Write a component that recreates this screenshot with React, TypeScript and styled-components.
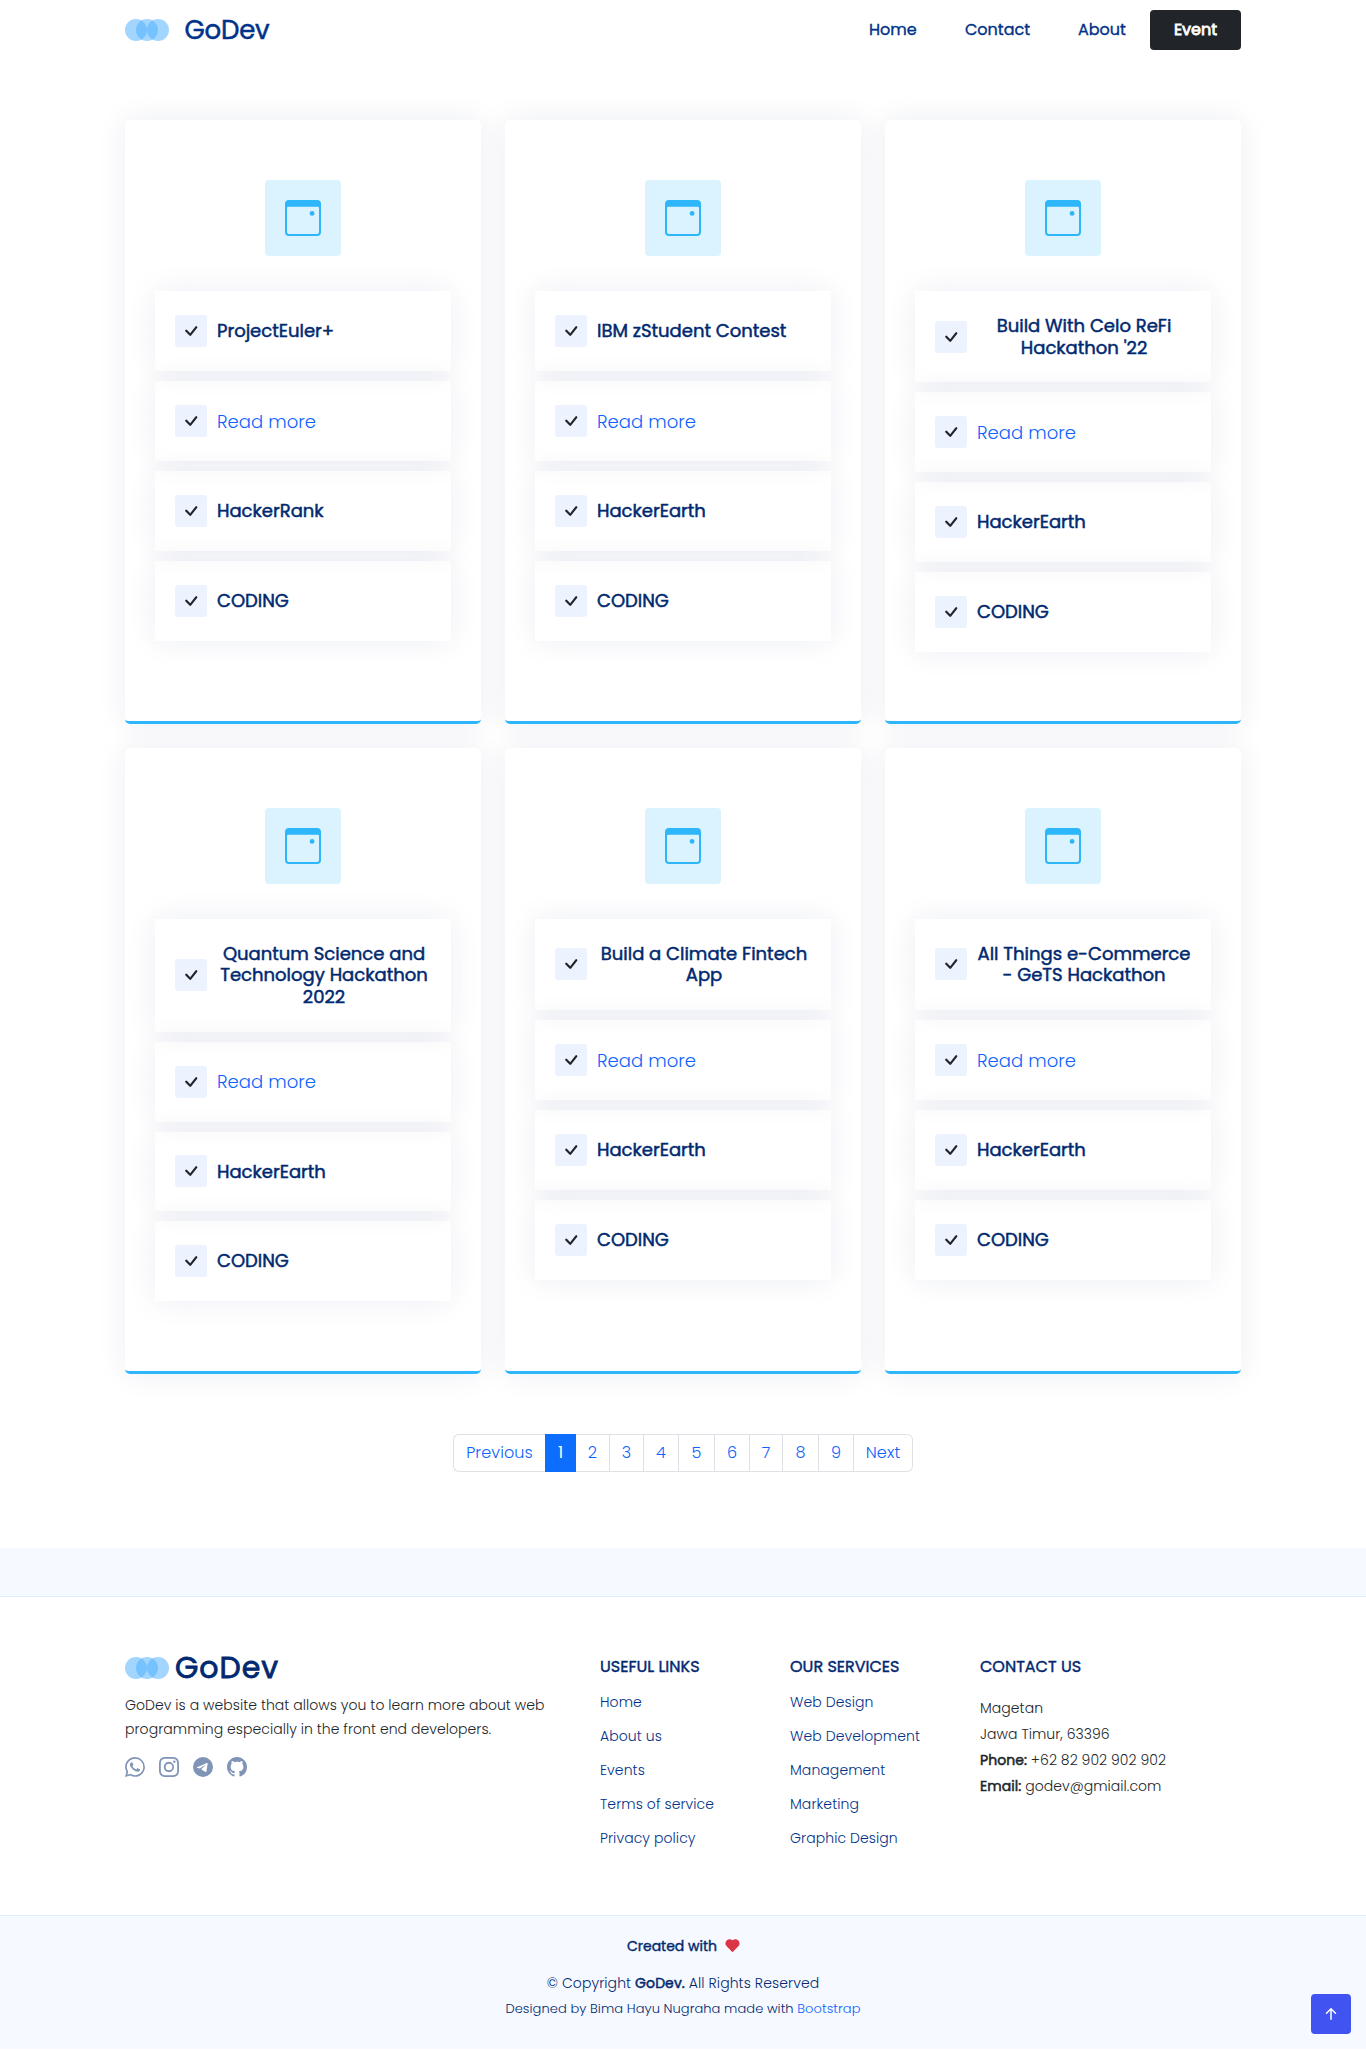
import React from "react";
import styled, { createGlobalStyle, css } from "styled-components";
import { BsWhatsapp, BsInstagram, BsTelegram, BsGithub, BsCheck, BsArrowUpShort } from "react-icons/bs";
import { BiSolidHeart } from "react-icons/bi";

const GlobalStyle = createGlobalStyle`
  *, *::before, *::after { box-sizing: border-box; }
  body {
    margin: 0;
    background: #fff;
    color: #212529;
    font-family: Poppins, Inter, "Open Sans", sans-serif;
    font-size: 16px;
    font-weight: 300;
  }
  h1, h2, h3, h4, p, ul { margin: 0; padding: 0; }
  ul { list-style: none; }
  a { text-decoration: none; color: inherit; }
`;

const link = "#0d63fd";

/* Regular letter shapes thickened by a thin outline of the same colour. */
const heavy = (stroke: number) => css`
  font-weight: 400;
  -webkit-text-stroke: ${stroke}px currentColor;
`;

const Page = styled.div`
  display: flex;
  flex-direction: column;
  min-height: 2052px;
`;

const Container = styled.div`
  width: 1116px;
  margin: 0 auto;
`;

const Header = styled.header`
  height: 60px;
`;

const HeaderRow = styled(Container)`
  height: 60px;
  display: flex;
  align-items: center;
  justify-content: space-between;
`;

const Brand = styled.a`
  display: flex;
  align-items: center;
  gap: 15.5px;
`;

const BrandName = styled.span`
  font-size: 26px;
  line-height: 30px;
  color: #013289;
  letter-spacing: -0.2px;
  ${heavy(0.5)}
`;

const Nav = styled.nav`
  display: flex;
  align-items: center;
`;

const NavLink = styled.a<{ $w: number }>`
  width: ${(p) => p.$w}px;
  margin-right: 48px;
  padding-bottom: 2px;
  white-space: nowrap;
  color: #013289;
  ${heavy(0.35)}
`;

const NavButton = styled.a`
  width: 91px;
  height: 40px;
  margin-left: -24px;
  padding-bottom: 2px;
  border-radius: 4px;
  display: flex;
  align-items: center;
  justify-content: center;
  background: #212529;
  color: #fff;
  ${heavy(0.8)}
`;

const Cards = styled(Container)`
  padding-top: 60px;
  display: grid;
  grid-template-columns: repeat(3, 356px);
  grid-template-rows: 603.7px 626px;
  gap: 24px;
`;

const Card = styled.article`
  padding: 60px 30px 0;
  border-bottom: 3px solid #2db6fa;
  border-radius: 5px;
  box-shadow: 0 0 30px rgba(1, 41, 112, 0.08);
  display: flex;
  flex-direction: column;
  align-items: center;
`;

const IconTile = styled.div`
  width: 76px;
  height: 76px;
  margin-bottom: 35.2px;
  border-radius: 4px;
  background: #dbf3ff;
  display: grid;
  place-items: center;
`;

const Features = styled.div`
  width: 100%;
  display: flex;
  flex-direction: column;
  gap: 10px;
`;

const Feature = styled.div`
  min-height: 79.85px;
  padding: 0 20px;
  display: flex;
  align-items: center;
  gap: 10px;
  box-shadow: 0 0 30px rgba(1, 41, 112, 0.08);
`;

const Tick = styled.span`
  flex: none;
  width: 32px;
  height: 32px;
  border-radius: 3px;
  background: #ecf3ff;
  display: grid;
  place-items: center;
`;

const FeatureTitle = styled.h3<{ $wrapped?: boolean }>`
  padding: 24px 0;
  font-size: 18px;
  line-height: 21.6px;
  text-align: center;
  color: #012970;
  white-space: pre;
  flex: ${(p) => (p.$wrapped ? 1 : "none")};
  ${heavy(0.5)}
`;

const FeatureLink = styled.a`
  font-size: 18px;
  line-height: 22px;
  padding-top: 1.5px;
  color: ${link};
  letter-spacing: 0.04px;
`;

const Pager = styled.ul`
  width: 460px;
  margin: 60.3px auto 0;
  display: flex;
`;

const PageItem = styled.li<{ $w: number; $active?: boolean }>`
  width: ${(p) => p.$w}px;
  height: 38px;
  display: flex;
  align-items: center;
  justify-content: center;
  border: 1px solid ${(p) => (p.$active ? "#0d6efd" : "#dee2e6")};
  border-left-width: ${(p) => (p.$active ? 1 : 0)}px;
  background: ${(p) => (p.$active ? "#0d6efd" : "#fff")};
  color: ${(p) => (p.$active ? "#fff" : link)};
  font-weight: ${(p) => (p.$active ? 400 : 300)};
  letter-spacing: 0.1px;
  &:first-child {
    border-left-width: 1px;
    border-right: 0;
    border-radius: 6px 0 0 6px;
  }
  &:last-child { border-radius: 0 6px 6px 0; }
`;

const Band = styled.div`
  height: 49px;
  margin-top: 76px;
  background: #f6f9ff;
  border-bottom: 1px solid #e1ecff;
`;

const FooterTop = styled(Container)`
  height: 318px;
  padding-top: 57px;
  display: grid;
  grid-template-columns: 475px 190px 190px 1fr;
  font-size: 14px;
`;

const FooterBrand = styled(Brand)`
  height: 26px;
  margin-top: 1px;
  gap: 6px;
`;

const FooterBrandName = styled.span`
  font-size: 30px;
  line-height: 30px;
  color: #012970;
  letter-spacing: 1px;
  ${heavy(0.8)}
`;

const About = styled.p`
  margin-top: 12px;
  line-height: 24px;
  white-space: nowrap;
`;

const Line = styled.span`
  display: block;
  letter-spacing: 0.05px;
`;

const Socials = styled.div`
  margin-top: 16px;
  display: flex;
  gap: 14px;
  color: #8094b7;
`;

const FooterHeading = styled.h4`
  height: 26px;
  line-height: 26px;
  font-size: 16px;
  color: #012970;
  white-space: nowrap;
  ${heavy(0.4)}
`;

const LinkList = styled.ul`
  margin-top: 5px;
  line-height: 34px;
  color: #013289;
`;

const LinkItem = styled.li`
  white-space: nowrap;
  letter-spacing: 0.08px;
`;

const Address = styled.p`
  margin-top: 15px;
  line-height: 26px;
  white-space: nowrap;
`;

const Strong = styled.strong`
  ${heavy(0.5)}
`;

const FooterBottom = styled.div`
  height: 134px;
  padding-top: 18px;
  background: #f6f9ff;
  border-top: 1px solid #e1ecff;
  color: #012970;
  display: flex;
  flex-direction: column;
  align-items: center;
  font-size: 14px;
`;

const Created = styled.div`
  height: 26px;
  padding-left: 2px;
  display: flex;
  align-items: center;
  gap: 7px;
  ${heavy(0.4)}

  svg {
    margin-bottom: 2px;
    stroke-width: 0;
  }
`;

const Copyright = styled.div`
  margin-top: 10px;
  line-height: 26px;
  letter-spacing: 0.09px;
`;

const Credits = styled.div`
  line-height: 25px;
  font-size: 13px;
  letter-spacing: 0.07px;
`;

const CreditLink = styled.a`
  color: ${link};
`;

const BackToTop = styled.a`
  position: fixed;
  right: 15px;
  top: 1994px;
  width: 40px;
  height: 40px;
  border-radius: 4px;
  background: #4154f1;
  color: #fff;
  display: grid;
  place-items: center;
`;

const Logo = () => (
  <svg width="44" height="22" viewBox="0 0 44 22" fill="#47aeff" fillOpacity="0.5">
    <circle cx="11" cy="11" r="11" />
    <circle cx="22" cy="11" r="11" />
    <circle cx="33" cy="11" r="11" />
  </svg>
);

const WindowIcon = () => (
  <svg width="36" height="36" viewBox="0 0 36 36" fill="#2db6fa">
    <path
      fillRule="evenodd"
      d="M4 0H32a4 4 0 0 1 4 4V32a4 4 0 0 1-4 4H4a4 4 0 0 1-4-4V4a4 4 0 0 1 4-4ZM2 8V32a2 2 0 0 0 2 2H32a2 2 0 0 0 2-2V8a1.200 1.200 0 0 0-1.200-1.200H3.200A1.200 1.200 0 0 0 2 8Z"
    />
    <circle cx="27.100" cy="13.400" r="2.400" />
  </svg>
);

const events = [
  { title: "ProjectEuler+", host: "HackerRank" },
  { title: "IBM zStudent Contest", host: "HackerEarth" },
  { title: "Build With Celo ReFi\nHackathon '22", host: "HackerEarth" },
  { title: "Quantum Science and\nTechnology Hackathon\n2022", host: "HackerEarth" },
  { title: "Build a Climate Fintech\nApp", host: "HackerEarth" },
  { title: "All Things e-Commerce\n- GeTS Hackathon", host: "HackerEarth" },
];

const pages: [string, number][] = [
  ["Previous", 92], ["1", 31], ["2", 34], ["3", 34], ["4", 35], ["5", 36],
  ["6", 35], ["7", 33], ["8", 36], ["9", 35], ["Next", 59],
];

const usefulLinks = ["Home", "About us", "Events", "Terms of service", "Privacy policy"];
const services = ["Web Design", "Web Development", "Management", "Marketing", "Graphic Design"];

const Check = () => (
  <Tick>
    <BsCheck size={24} />
  </Tick>
);

const LinkColumn = ({ heading, items }: { heading: string; items: string[] }) => (
  <div>
    <FooterHeading>{heading}</FooterHeading>
    <LinkList>
      {items.map((item) => (
        <LinkItem key={item}>
          <a>{item}</a>
        </LinkItem>
      ))}
    </LinkList>
  </div>
);

export default function App() {
  return (
    <Page>
      <GlobalStyle />
      <Header>
        <HeaderRow>
          <Brand>
            <Logo />
            <BrandName>GoDev</BrandName>
          </Brand>
          <Nav>
            <NavLink $w={48}>Home</NavLink>
            <NavLink $w={65}>Contact</NavLink>
            <NavLink $w={48}>About</NavLink>
            <NavButton>Event</NavButton>
          </Nav>
        </HeaderRow>
      </Header>
      <Cards as="main">
        {events.map((e) => (
          <Card key={e.title}>
            <IconTile>
              <WindowIcon />
            </IconTile>
            <Features>
              <Feature>
                <Check />
                <FeatureTitle $wrapped={e.title.includes("\n")}>{e.title}</FeatureTitle>
              </Feature>
              <Feature>
                <Check />
                <FeatureLink>Read more</FeatureLink>
              </Feature>
              <Feature>
                <Check />
                <FeatureTitle>{e.host}</FeatureTitle>
              </Feature>
              <Feature>
                <Check />
                <FeatureTitle>CODING</FeatureTitle>
              </Feature>
            </Features>
          </Card>
        ))}
      </Cards>
      <Pager>
        {pages.map(([label, w]) => (
          <PageItem key={label} $w={w} $active={label === "1"}>
            {label}
          </PageItem>
        ))}
      </Pager>
      <Band />
      <FooterTop as="footer">
        <div>
          <FooterBrand>
            <Logo />
            <FooterBrandName>GoDev</FooterBrandName>
          </FooterBrand>
          <About>
            <Line>GoDev is a website that allows you to learn more about web</Line>
            <Line>programming especially in the front end developers.</Line>
          </About>
          <Socials>
            <BsWhatsapp size={20} />
            <BsInstagram size={20} />
            <BsTelegram size={20} />
            <BsGithub size={20} />
          </Socials>
        </div>
        <LinkColumn heading="USEFUL LINKS" items={usefulLinks} />
        <LinkColumn heading="OUR SERVICES" items={services} />
        <div>
          <FooterHeading>CONTACT US</FooterHeading>
          <Address>
            <Line>Magetan</Line>
            <Line>Jawa Timur, 63396</Line>
            <Line><Strong>Phone:</Strong> +62 82 902 902 902</Line>
            <Line><Strong>Email:</Strong> godev@gmiail.com</Line>
          </Address>
        </div>
      </FooterTop>
      <FooterBottom>
        <Created>
          Created with
          <BiSolidHeart size={17} color="#dc3545" />
        </Created>
        <Copyright>
          © Copyright <Strong>GoDev.</Strong> All Rights Reserved
        </Copyright>
        <Credits>
          Designed by Bima Hayu Nugraha made with <CreditLink>Bootstrap</CreditLink>
        </Credits>
      </FooterBottom>
      <BackToTop>
        <BsArrowUpShort size={24} />
      </BackToTop>
    </Page>
  );
}
